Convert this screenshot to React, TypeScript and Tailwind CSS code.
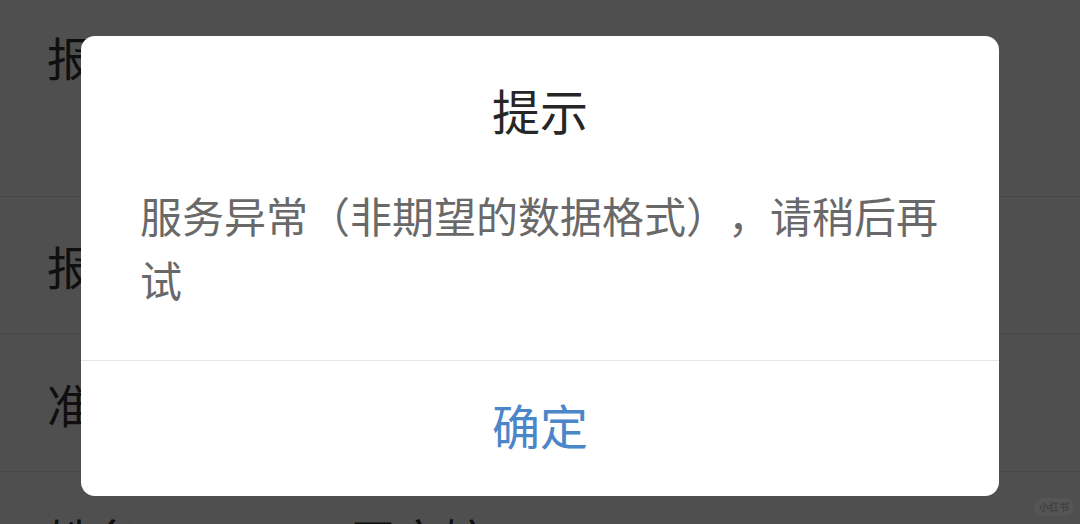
import React from 'react';

const font = { fontFamily: '"Noto Sans CJK SC", "Noto Sans", sans-serif' };

const rows = [
  { label: '报名序号', value: '公开招聘工作人员笔试报名确认', h: 'h-[197px]', pad: 'pt-[25px] items-start', col: 'w-[355px]' },
  { label: '报考单位', value: '市直属事业单位', h: 'h-[137px]', pad: 'items-center', col: 'w-[303px]' },
  { label: '准考证号', value: '20240315021', h: 'h-[138px]', pad: 'items-center', col: 'w-[303px]' },
  { label: '姓名', value: '王文婷', h: 'h-[137px]', pad: 'pt-[35px] items-start', col: 'w-[303px]' },
];

const App: React.FC = () => {
  return (
    <div className="relative w-[1080px] h-[524px] overflow-hidden bg-white" style={font}>
      {/* page behind the modal */}
      <div className="flex flex-col">
        {rows.map((r) => (
          <div key={r.label} className={`${r.h} ${r.pad} flex border-b border-[#e5e5e5] pl-[47px] pr-[90px]`}>
            <div className={`${r.col} shrink-0 text-[46px] leading-[62px] text-[#333] whitespace-nowrap overflow-hidden`}>{r.label}</div>
            <div className="flex-1 text-[46px] leading-[62px] text-[#333] whitespace-nowrap overflow-hidden">{r.value}</div>
          </div>
        ))}
      </div>

      {/* mask + dialog */}
      <div className="absolute inset-0 bg-black/[0.69] flex justify-center items-start pt-[36px]">
        <div className="w-[918px] h-[460px] bg-white rounded-[14px] flex flex-col overflow-hidden">
          <div className="pt-[45px] text-center text-[48px] leading-[56px] text-[#262626]">提示</div>
          <div className="mt-[46px] px-[59px] pb-[49px] text-[42px] leading-[64px] text-[#696969] [text-spacing-trim:space-all]">
            服务异常（非期望的数据格式），请稍后再试
          </div>
          <div className="flex-1 border-t border-[#e6e6e6] flex items-center justify-center">
            <span className="text-[48px] leading-[56px] text-[#4a86c8] -mt-[10px]">确定</span>
          </div>
        </div>
      </div>

      {/* watermark */}
      <div className="absolute right-[6px] bottom-[8px] h-[18px] px-[5px] rounded-full bg-[#555555] flex items-center">
        <span className="text-[10px] leading-none text-[#424242] font-bold">小红书</span>
      </div>
    </div>
  );
};

export default App;
